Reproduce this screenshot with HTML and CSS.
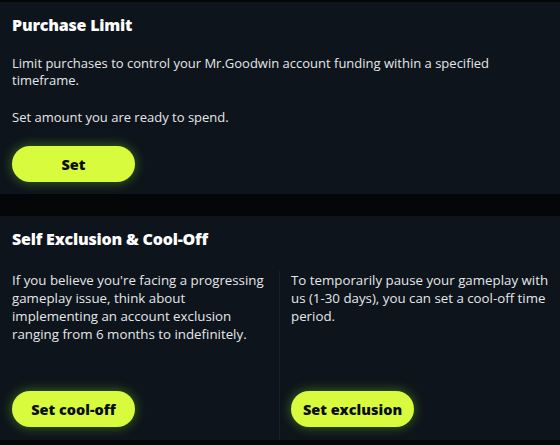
FILE: index.html
```html
<!DOCTYPE html>
<html lang="en">
<head>
<meta charset="utf-8">
<link rel="stylesheet" href="styles.css">
</head>
<body>
<div class="page">
  <section class="card card-limit">
    <h2 class="title">Purchase Limit</h2>
    <p class="text">Limit purchases to control your Mr.Goodwin account funding within a specified timeframe.</p>
    <p class="text text-second">Set amount you are ready to spend.</p>
    <button class="btn">Set</button>
  </section>
  <section class="card card-excl">
    <h2 class="title">Self Exclusion &amp; Cool-Off</h2>
    <div class="cols">
      <div class="col col-left">
        <p class="text">If you believe you're facing a progressing gameplay issue, think about implementing an account exclusion ranging from 6 months to indefinitely.</p>
        <button class="btn">Set cool-off</button>
      </div>
      <div class="col col-right">
        <p class="text">To temporarily pause your gameplay with us (1-30 days), you can set a cool-off time period.</p>
        <button class="btn">Set exclusion</button>
      </div>
    </div>
  </section>
</div>
</body>
</html>
```

FILE: styles.css
```css
html, body {
  margin: 0;
  padding: 0;
  background: #050607;
}
body {
  width: 560px;
  height: 445px;
  overflow: hidden;
  font-family: "Open Sans", "Noto Sans", sans-serif;
  color: #e9ecef;
}
.page {
  display: flex;
  flex-direction: column;
  padding-top: 2px;
  gap: 22px;
}
.card {
  background: #0e141b;
  box-sizing: border-box;
  padding: 12px 12px 0 12px;
  display: flex;
  flex-direction: column;
  align-items: flex-start;
}
.card-limit {
  height: 192px;
}
.card-excl {
  height: 224px;
}
.title {
  margin: 0;
  font-size: 16px;
  font-weight: 800;
  line-height: 22px;
  color: #ffffff;
  letter-spacing: -0.2px;
}
.text {
  margin: 0;
  font-size: 13px;
  line-height: 17px;
  color: #e4e7ea;
}
.card-limit .title {
  margin-bottom: 19px;
}
.text-second {
  margin-top: 20px;
}
.btn {
  display: block;
  border: none;
  width: 123px;
  height: 36px;
  border-radius: 18px;
  background: #d9fb3d;
  color: #0b0d10;
  font-family: "Open Sans", "Noto Sans", sans-serif;
  font-weight: 800;
  font-size: 14.5px;
  padding: 0;
  box-shadow: 0 0 12px rgba(120, 230, 40, 0.45);
}
.card-limit .btn {
  margin-top: 20px;
}
.cols {
  flex: 1;
  align-self: stretch;
  display: grid;
  grid-template-columns: 279px 1fr;
  margin: 21px -12px 0 -12px;
}
.col {
  display: flex;
  flex-direction: column;
  justify-content: space-between;
  align-items: flex-start;
  box-sizing: border-box;
  padding: 0 12px 13px 12px;
}
.col-right {
  border-left: 1px solid #1a2028;
  padding-left: 11px;
  padding-right: 3px;
}
.card-excl .text {
  font-size: 13.3px;
  line-height: 18px;
}
```
